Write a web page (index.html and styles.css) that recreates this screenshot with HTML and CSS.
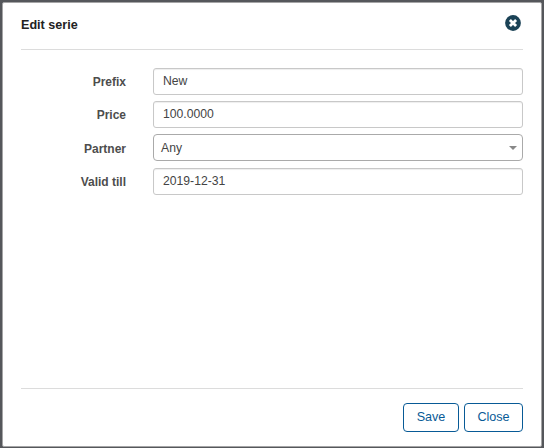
FILE: index.html
```html
<!DOCTYPE html>
<html lang="en">
<head>
<meta charset="utf-8">
<title>Edit serie</title>
<link rel="stylesheet" href="styles.css">
</head>
<body>
<main class="dialog">
  <header class="dialog-header">
    <h1 class="title">Edit serie</h1>
    <svg class="close-icon" viewBox="0 0 16 16" role="img">
      <circle cx="8" cy="8" r="7.9" fill="#1b4256"/>
      <path d="M4.9 4.9l6.2 6.2M11.1 4.9l-6.2 6.2" stroke="#fff" stroke-width="2.8"/>
    </svg>
  </header>
  <section class="form">
    <div class="row"><span class="label">Prefix</span><div class="field"><span class="value">New</span></div></div>
    <div class="row"><span class="label">Price</span><div class="field"><span class="value">100.0000</span></div></div>
    <div class="row row-select"><span class="label">Partner</span><div class="field select"><span class="value">Any</span><i class="arrow"></i></div></div>
    <div class="row"><span class="label">Valid till</span><div class="field"><span class="value">2019-12-31</span></div></div>
  </section>
  <footer class="dialog-footer">
    <button class="button save" type="button">Save</button>
    <button class="button close" type="button">Close</button>
  </footer>
</main>
</body>
</html>
```
FILE: styles.css
```css
* { box-sizing: border-box; }
body {
  margin: 0;
  height: 448px;
  padding: 2px 2px 1px 2px;
  overflow: hidden;
  background: #55575b;
  font-family: "Liberation Sans", Arial, sans-serif;
  font-size: 12.2px;
}
.dialog {
  display: flex;
  flex-direction: column;
  height: 445px;
  padding: 0 18px;
  border: 1px solid #a5a5a6;
  border-radius: 2px;
  background: #fff;
}
.dialog-header {
  display: flex;
  justify-content: space-between;
  align-items: flex-start;
  height: 47px;
  padding-top: 12px;
  border-bottom: 1px solid #dcdcdc;
}
.title {
  margin: 2px 0 0;
  font-size: 12.6px;
  line-height: 16px;
  color: #222;
}
.close-icon {
  width: 16px;
  height: 16px;
  margin-right: 2px;
}
.form {
  flex: 1;
  display: flex;
  flex-direction: column;
  gap: 6px;
  padding-top: 18px;
}
.row {
  display: flex;
  height: 27px;
}
.row-select { margin-bottom: 1px; }
.label {
  width: 105px;
  margin-right: 27px;
  padding-top: 1px;
  text-align: right;
  font-size: 12px;
  font-weight: bold;
  line-height: 27px;
  color: #4d4d4d;
}
.row-select .label { line-height: 29px; }
.field {
  display: flex;
  flex: 1;
  justify-content: space-between;
  padding: 0 9px;
  border: 1px solid #c8c8c8;
  border-radius: 3px;
  box-shadow: inset 0 1px 1px rgba(0, 0, 0, .07);
  line-height: 24px;
  color: #444;
}
.select {
  padding: 0 5px 0 7px;
  border-color: #aaa;
  border-radius: 4px;
  box-shadow: none;
  line-height: 26px;
}
.arrow {
  align-self: center;
  border: solid transparent;
  border-width: 4px 4px 0;
  border-top-color: #888;
}
.dialog-footer {
  display: flex;
  justify-content: flex-end;
  gap: 5px;
  height: 58px;
  padding-top: 14px;
  border-top: 1px solid #dcdcdc;
}
.button {
  height: 29px;
  padding: 0 0 2px;
  border: 1px solid #085a96;
  border-radius: 4px;
  background: #fff;
  color: #085a96;
  font: 12.6px "Liberation Sans", Arial, sans-serif;
}
.save { width: 56px; }
.close { width: 59px; }
```
